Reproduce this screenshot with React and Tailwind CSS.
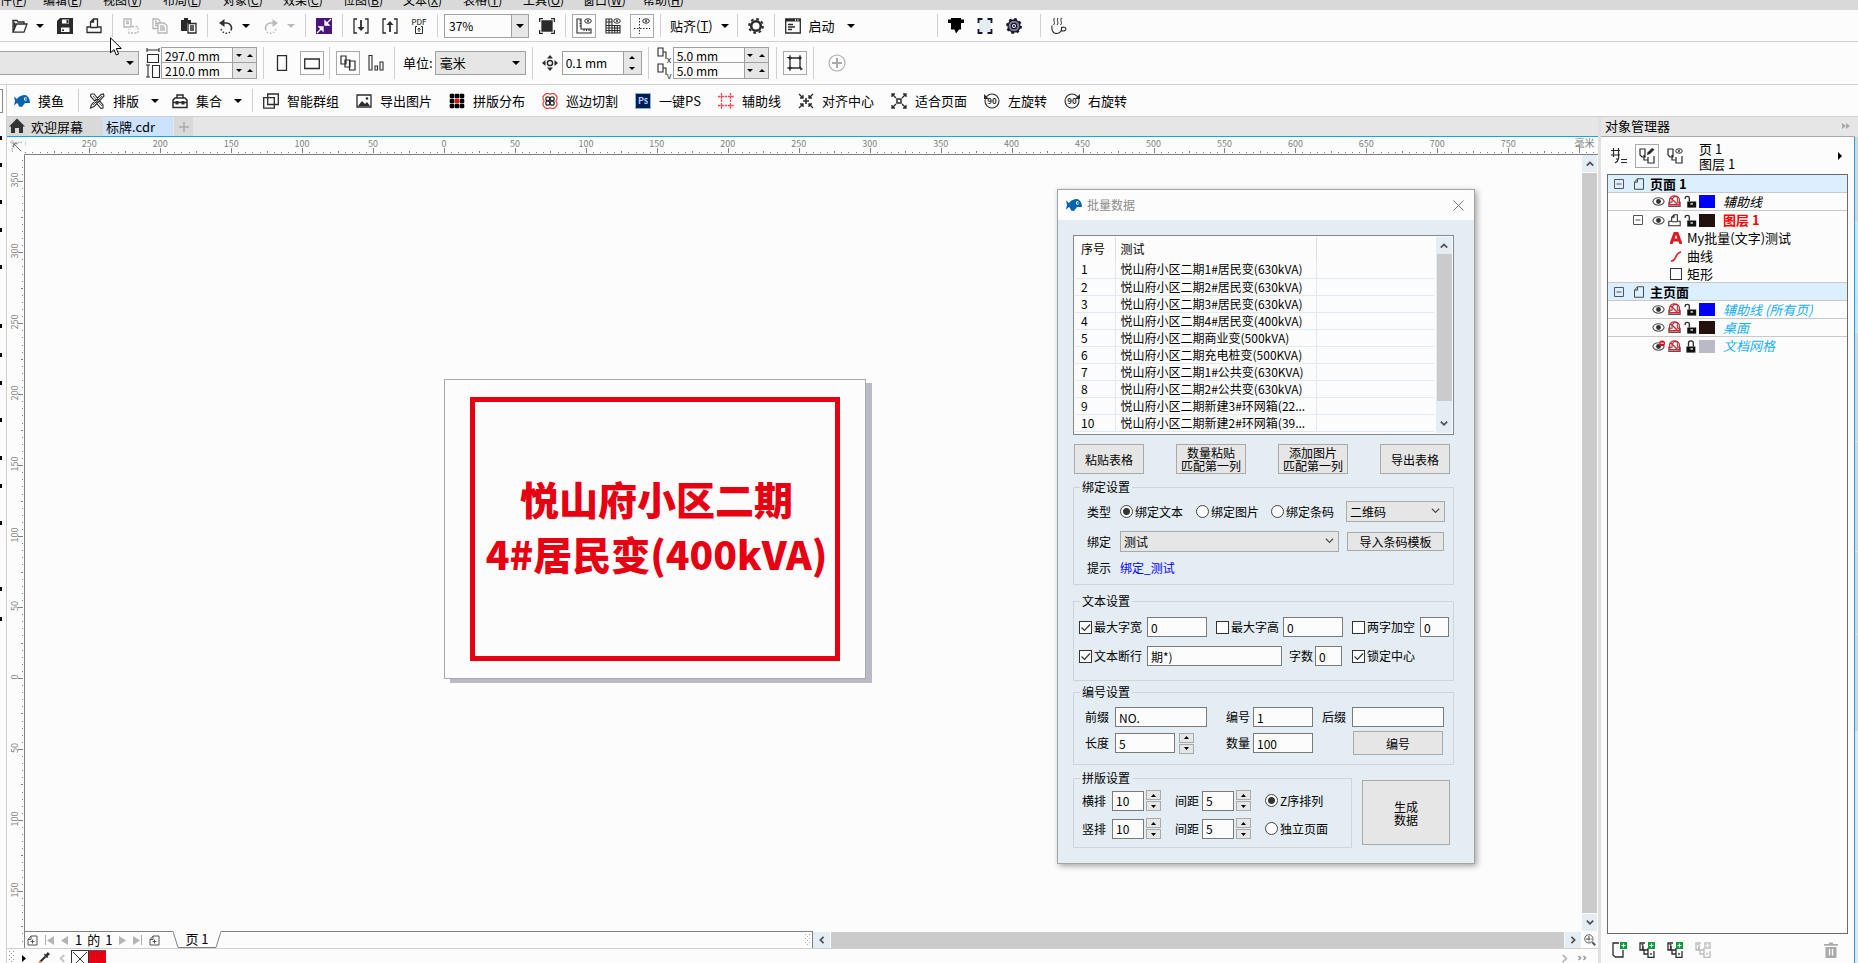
import React from "react";

/* ---------- icons ---------- */

function Svg({ children, size = "size-4", className = "", box = "0 0 16 16" }) {
  return (
    <svg viewBox={box} className={`${size} shrink-0 ${className}`} fill="none" stroke="#2b2b2b" strokeWidth="1.3" aria-hidden="true">
      {children}
    </svg>
  );
}

const FolderIcon = () => (
  <Svg><path d="M1 14V2.500h4l1 1.500h6v2M1 14.200 4.500 6H15l-3 8.200z" /><path d="M1.500 3v9L4 6z" fill="#2b2b2b" stroke="none" /></Svg>
);
const SaveIcon = () => (
  <Svg><path d="M3 0h13v16H0V3z" fill="#2b2b2b" stroke="none" /><path d="M5 1.500h7v4H5zM4 9.500h8.500v4.500H4z" fill="#fcfcfc" stroke="none" /><path d="M9.500 2h2v3h-2zM5 11.500h2v1.500H5z" fill="#2b2b2b" stroke="none" /></Svg>
);
const PrintIcon = ({ className = "", size = "size-4" }) => (
  <Svg className={className} size={size}><path d="M4.500 9V4l3-3h4v8M4.500 9H1v5.500h14V9h-3.500M4.500 9.500h7M7.500 1v3h-3" /></Svg>
);
const CutIcon = () => (
  <Svg><g stroke="#b5b5b5"><path d="M1 1h7v8H1zM3 3.500h3M3 5.500h3" /><path d="M9 8.500h6v6.500H6v-4" strokeDasharray="2 1.500" /></g></Svg>
);
const CopyIcon = () => (
  <Svg><g stroke="#b5b5b5"><path d="M6 10.500H1V1h5l2 2v2M3 3.500h2M3 5.500h3M3 7.500h3" /><path d="M6 5h6l3 2.500V15H6zM8 8h4M8 10h5M8 12h5" /></g></Svg>
);
const PasteIcon = () => (
  <Svg><path d="M0 2h3V0h4v2h3v3H6v8H0z" fill="#2b2b2b" stroke="none" /><path d="M7 5.500h8V15H7zM9 8h4M9 10h4M9 12h4" /></Svg>
);
const UndoIcon = ({ flip = false, color = "#333" }) => (
  <Svg className={flip ? "-scale-x-100" : ""}><path d="M3 5h5.500a5.200 5.200 0 0 1 4.500 7.500" stroke={color} strokeWidth="1.600" /><path d="M12 14a5.500 5.500 0 0 1-9-3.500" stroke={color} strokeWidth="1.500" strokeDasharray="1.500 1.700" /><path d="M6.500 1 1 5l5.500 4z" fill={color} stroke="none" /></Svg>
);
const LaunchIcon = () => (
  <Svg><path d="M0 0h16v16H0z" fill="#4b147a" stroke="none" /><g stroke="#fff"><path d="m15 1-5 5M1 15l5-5" /><path d="M9 3v4h4zM7 13V9H3z" fill="#fff" /></g></Svg>
);
const ImportIcon = ({ up = false }) => (
  <Svg><path d="M4 1H1v14h3M12 1h3v14h-3" /><path d={up ? "M8 14V5" : "M8 2v9"} strokeWidth="1.800" /><path d={up ? "M4.500 7 8 3l3.500 4z" : "M4.500 9 8 13l3.500-4z"} fill="#2b2b2b" stroke="none" /></Svg>
);
const PdfIcon = () => (
  <span className="flex w-4 flex-col items-center justify-center">
    <span className="text-[8px] leading-2">PDF</span>
    <svg viewBox="0 0 8 8" className="size-2" fill="none" stroke="#2b2b2b" aria-hidden="true"><path d="M2 .5H.5v7h7v-7H6M4 6V2M2.500 3.500 4 2l1.500 1.500" /></svg>
  </span>
);
const FullIcon = () => (
  <Svg><path d="M3 3h10v10H3z" fill="#2b2b2b" /><path d="M.6 4V.6H4M12 .6h3.400V4M15.400 12v3.400H12M4 15.400H.6V12" /></Svg>
);
const EyeSmall = () => (
  <g strokeWidth="1"><ellipse cx="12" cy="3" rx="3.300" ry="2.200" /><circle cx="12" cy="3" r="1" fill="#2b2b2b" stroke="none" /></g>
);
const RulerIcon = () => (
  <Svg><path d="M1 1v14h14v-4H5V1zM3.500 3H5M3.500 5.500H5M3.500 8H5M8 11v2M10.500 11v2M13 11v2" strokeWidth="1.100" /><EyeSmall /></Svg>
);
const GridIcon = () => (
  <Svg><path d="M7 1H1v14h14V7M1 4h6M1 7.500h14M1 10h14M1 12.500h14M4 1v14M7 1v14M9.700 7v8M12.300 7v8" strokeWidth="1.100" /><EyeSmall /></Svg>
);
const GuideIcon = () => (
  <Svg><path d="M5.500 0v16M0 10.500h16" strokeWidth="1" strokeDasharray="1.500 1.500" /><EyeSmall /></Svg>
);
const GearIcon = () => (
  <Svg><circle cx="8" cy="8" r="4.800" strokeWidth="2.600" /><circle cx="8" cy="8" r="7" strokeWidth="1.800" strokeDasharray="2.750 2.750" /></Svg>
);
const WindowIcon = () => (
  <Svg><path d="M.7 1h14.600v14H.7z" /><path d="M1 1h14v2.500H1z" fill="#2b2b2b" stroke="none" /><path d="M10 2h1M12.500 2h1" stroke="#fff" /><path d="M3 6.500h5M3 9h7M3 11.500h4" /></Svg>
);
const TagIcon = () => (
  <Svg><path d="M0 1.500h3V0h10v1.500h3V5h-3v6.500h-2L8 15.500 6.500 11.500H3V5H0z" fill="#000" stroke="none" /></Svg>
);
const CornersIcon = () => (
  <Svg><path d="M2 2h12v12H2z" fill="#e4ecf4" stroke="none" /><path d="M1.500 5V1h4M10.500 1h4v4M14.500 11v4h-4M5.500 15h-4v-4" strokeWidth="1.800" stroke="#15152b" /></Svg>
);
const CogDarkIcon = () => (
  <Svg><circle cx="8" cy="8" r="7" stroke="#15152b" strokeWidth="1.800" strokeDasharray="2.750 2.750" /><circle cx="8" cy="8" r="6" fill="#7b7b93" stroke="#15152b" /><circle cx="8" cy="8" r="2.600" fill="#fcfcfc" stroke="#15152b" /><circle cx="8" cy="8" r="1" fill="#15152b" stroke="none" /></Svg>
);
const CupIcon = () => (
  <Svg><path d="M1 7.500c-.5 4 .5 8 4.500 8s5.500-3 5-6.500M10.500 10c1-1.500 4.500-1 4.500 1s-3 2.500-5 1.500" strokeWidth="1.100" /><path d="M3.500 0C1.500 3 5 4 2.500 7M7 0C5 3 8.500 4 6 7M10.500 0C8.500 3 12 4 9.500 7" strokeWidth="1" /></Svg>
);
const FishIcon = () => (
  <Svg box="0 0 16 12" size="h-3 w-4"><path d="M0 1.500 3 4C5 1 8 0 11 0c3 .500 5 4 5 8h-5l-1 1.200L8 12l-3-.5L4 9 3 8 0 10.500 1 6z" fill="#0763b0" stroke="none" /><circle cx="11.500" cy="4" r="1.700" fill="#fff" stroke="none" /><circle cx="11.900" cy="4" r=".9" fill="#0763b0" stroke="none" /></Svg>
);
const ToolsIcon = () => (
  <Svg><path d="M2 1h3l9 11v3l-2 .5L1.500 3zM14.500 1l.5 2L5 13.500 1.500 15l1-3.500L12 1.500z" fill="#fcfcfc" strokeWidth="1.100" /><path d="m4 3 9 10M13 3 4 12" strokeWidth=".8" /></Svg>
);
const BoxIcon = () => (
  <Svg><path d="M5 5V2h6v3M1 7l2-2h10l2 2v7.500H1zM1 9.500h14" strokeWidth="1.500" /><path d="M3.500 8h3v3.500h-3zM9.500 8h3v3.500h-3z" fill="#2b2b2b" stroke="none" /></Svg>
);
const GroupIcon = () => (
  <Svg><path d="M4.700 1h10.600v10.500H4.700zM.7 4.700h10.600v10.500H.7z" /></Svg>
);
const ImageIcon = () => (
  <Svg><path d="M1 2h14v12H1z" /><path d="m2 13 4-5 3 3 2-2 3 4z" fill="#2b2b2b" stroke="none" /><circle cx="11" cy="5.500" r="1.300" fill="#2b2b2b" stroke="none" /></Svg>
);
const DotsIcon = () => (
  <Svg>
    {[3, 8, 13].map((y) => [3, 8, 13].map((x) => (
      <rect key={`${x}-${y}`} x={x - 2.3} y={y - 2.3} width="4.600" height="4.600" rx="1.200" stroke="none" fill={x === 8 && y === 8 ? "#f00" : "#000"} />
    )))}
  </Svg>
);
const CloverIcon = () => (
  <Svg><path d="M8 1.300C10 0 13 .5 14 2.500c1.500 1.500 1 4-.2 5.500 1.200 1.500 1.700 4 .2 5.500-1 2-4 2.500-6 1.200-2 1.300-5 .8-6-1.200C.5 12 1 9.500 2.200 8 1 6.500.5 4 2 2.500 3 .5 6 0 8 1.300z" stroke="#e33" strokeWidth="1.100" /><circle cx="5.800" cy="5.800" r="2" /><circle cx="10.200" cy="5.800" r="2" /><circle cx="5.800" cy="10.200" r="2" /><circle cx="10.200" cy="10.200" r="2" /></Svg>
);
const PsIcon = () => (
  <span className="flex size-4 shrink-0 items-center justify-center border border-[#7fb2e8] bg-[#001b4e] text-[9px] leading-3 font-bold text-[#9fd0ff]">Ps</span>
);
const HashIcon = () => (
  <Svg><path d="M3.500 0v16M12.500 0v16M0 3.500h16M0 12.500h16" stroke="#e8434f" strokeWidth="1.300" strokeDasharray="2.500 .8" /></Svg>
);
const arrowsIn = "M1 1l4 4M5 2v3H2M15 1l-4 4M11 2v3h3M1 15l4-4M2 11h3v3M15 15l-4-4M14 11h-3v3";
const CenterIcon = () => (<Svg><path d={arrowsIn} /><path d="M8 5v6M5 8h6" strokeWidth="1.600" /></Svg>);
const FitIcon = () => (
  <Svg><path d="M1 1l4 4M1 4V1h3M15 1l-4 4M12 1h3v3M1 15l4-4M1 12v3h3M15 15l-4-4M15 12v3h-3" /><path d="M6 6h4v4H6z" strokeWidth="1.500" /></Svg>
);
const RotateIcon = ({ right = false }) => (
  <Svg>
    <circle cx="8" cy="8" r="7" strokeWidth="1.100" />
    <path d={right ? "M16 1v5h-5z" : "M0 1v5h5z"} fill="#2b2b2b" stroke="none" />
    <text x="8" y="11" fontSize="8" fontWeight="700" textAnchor="middle" fill="#2b2b2b" stroke="none">90</text>
  </Svg>
);
const WidthIcon = () => (<Svg><path d="M2 1v4M14 1v4M2 3h12M2.500 7.500h11v8h-11z" strokeWidth="1.100" /></Svg>);
const HeightIcon = () => (<Svg><path d="M1 2h4M1 14h4M3 2v12M7.500 2.500h7v12h-7z" strokeWidth="1.100" /></Svg>);
const PortraitIcon = () => (<Svg><path d="M3.500 .7h9v14.600h-9z" /></Svg>);
const LandscapeIcon = () => (<Svg><path d="M.7 4h14.600v9.500H.7z" /></Svg>);
const PagesIcon = () => (<Svg><path d="M1 1h5v8H1zM5 5h5v7H5zM9.500 6H15v9H9.500z" fill="#fcfcfc" strokeWidth="1.200" /></Svg>);
const BarsIcon = () => (<Svg><path d="M1 .5h3V15H1zM7 11h2.500v4H7zM12 7h3v8h-3z" strokeWidth="1.100" /></Svg>);
const NudgeIcon = () => (
  <Svg><circle cx="8" cy="8" r="2.600" strokeWidth="1.500" /><path d="M8 0 5 3.500h6zM8 16l-3-3.500h6zM0 8l3.500-3v6zM16 8l-3.500-3v6z" fill="#2b2b2b" stroke="none" /></Svg>
);
const DupIcon = ({ axis }) => (
  <Svg><path d="M1 1h5v8H1zM6 5h3v7" strokeWidth="1.100" /><text x="12" y="15.500" fontSize="9" textAnchor="middle" fill="#2b2b2b" stroke="none">{axis}</text></Svg>
);
const BoundsIcon = () => (
  <Svg><path d="M3 3h10v10H3z" /><path d="M2 2h2v2H2zM12 2h2v2h-2zM2 12h2v2H2zM0 2.500h2M3 0v2M13 0v2M0 13h2M3 14v2" fill="#2b2b2b" strokeWidth="1" /><path d="m12.500 10.500 3.500 4-2 .2-.5 1.300z" fill="#2b2b2b" stroke="none" /></Svg>
);
const PlusCircle = () => (
  <Svg size="size-[18px]" box="0 0 18 18"><circle cx="9" cy="9" r="8" stroke="#aaa" strokeWidth="1.100" /><path d="M9 4v10M4 9h10" stroke="#aaa" strokeWidth="2" /></Svg>
);
const HomeIcon = () => (
  <Svg><path d="M8 .5 16 8.500h-2V15h-4v-5H6v5H2V8.500H0z" fill="#333" stroke="none" /></Svg>
);
const OriginIcon = () => (
  <Svg size="size-3"><path d="M0 3h16M3 0v16" strokeDasharray="2 1.500" stroke="#999" /><path d="m5 5 10 10M5 10V5h5" stroke="#666" /></Svg>
);
const DocPlus = () => (
  <Svg size="size-[11px]" box="0 0 11 11"><path d="M1 4.500 4 1h6v9H1zM4 1v3.500H1M5.500 4.500v4M3.500 6.500h4" stroke="#555" strokeWidth="1" /></Svg>
);
const ZoomIcon = () => (
  <Svg size="size-3"><circle cx="6.500" cy="6.500" r="5.500" stroke="#555" /><path d="m11 11 4 4" stroke="#555" strokeWidth="2.500" /><path d="M6.500 3v7M3 6.500h7" stroke="#555" strokeDasharray="2 1" strokeWidth="2" /></Svg>
);
const DropperIcon = () => (
  <Svg size="size-3"><path d="m9 2 5 5-2 1-4-4zM10 4l3-4 3 3-4 3z" fill="#2b2b2b" stroke="none" /><path d="m10 6-7 7" strokeWidth="2.500" /><path d="m3.500 12-2 3" stroke="#e8762c" strokeWidth="2" /></Svg>
);
const EyeIcon = ({ off = false }) => (
  <Svg size="size-[13px]"><path d="M1 8c2-6 12-6 14 0-2 6-12 6-14 0z" stroke="#555" strokeWidth="1.300" /><circle cx="8" cy="8" r="3" fill="#333" stroke="none" />{off && <circle cx="12.500" cy="4" r="3.500" fill="#e60012" stroke="none" />}{off && <path d="M10.500 4h4" stroke="#fff" strokeWidth="1.500" />}</Svg>
);
const NoPrintIcon = () => (
  <Svg size="size-[13px]"><path d="M5 9V5l2.500-3h4v7H15v5H1V9z" stroke="#555" /><path d="M2 12V6c0-3 3-5 6-5s6 2 6 5v6zM3 3l10 10" stroke="#e0202c" strokeWidth="1.600" /></Svg>
);
const LockIcon = ({ closed = false }) => (
  <Svg size="size-[13px]"><path d={closed ? "M3 8h11v7.500H3z" : "M4 8h11v7.500H4z"} fill="#111" stroke="none" /><path d={closed ? "M5.500 8V4a3 3 0 0 1 6 0v4" : "M6.500 8V3.500C6.500 1 1.500 1 1.500 3.500V5"} strokeWidth="1.600" /><path d="M8 11h3" stroke="#fff" strokeWidth="1.600" /></Svg>
);
const PageIcon = () => (
  <Svg size="size-3"><path d="M2 5.500 6 1h8v14H2zM6 1v4.500H2" stroke="#444" /></Svg>
);
const StructIcon = () => (
  <Svg><path d="M2.500 0v9M0 2.500h9M0 7h9M7.500 0v9" strokeWidth="1.200" /><path d="M5 11h3M6 13.500 4 15M10 11.500h6M10 14.500h6M8 9l-2 5" strokeWidth="1.200" /></Svg>
);
const LayersIcon = ({ eye = false }) => (
  <Svg>
    <path d="M1 1h5v8H3L1 7zM5 7v5h4M9 9v6h6V8" strokeWidth="1.200" />
    {eye ? <EyeSmall /> : <path d="m8 7 .5-2.500L13 0l2.500 1.500L11 6z" fill="#2b2b2b" stroke="none" />}
  </Svg>
);
const NewLayerIcon = ({ label, grey = false }) => (
  <Svg>
    <g stroke={grey ? "#bbb" : "#2b2b2b"}>
      {label ? <path d="M6 1H1v7h4v4h4v3.300h6V9M4 4v4M9 6v6M5 8h4M12 11v2" strokeWidth="1.300" /> : <path d="M8 1H2v12l2.500 2H12V8" />}
    </g>
    {label && <text x="3.500" y="7.500" fontSize="7" fontWeight="700" textAnchor="middle" stroke="none" fill={grey ? "#bbb" : "#2b2b2b"}>{label}</text>}
    <path d="M9 0h7v7H9z" fill={grey ? "#ccc" : "#0a9a3c"} stroke="none" />
    <path d="M12.500 1.500v4M10.500 3.500h4" stroke="#fff" strokeWidth="1.200" />
  </Svg>
);
const TrashIcon = () => (
  <Svg><path d="M1 2h5V.5h4V2h5v1.800H1zM2.500 5h11v11h-11z" fill="#aaa" stroke="none" /><path d="M6.500 7v6.500M9.500 7v6.500" stroke="#fcfcfc" /></Svg>
);
const CloseIcon = () => (
  <Svg size="size-[11px]" box="0 0 11 11"><path d="m.5.5 10 10m0-10-10 10" stroke="#777788" strokeWidth="1" /></Svg>
);

const Tri = ({ dir = "down", size = "h-1 w-2", color = "#000" }) => {
  const d = { down: "M0 0h8L4 8z", up: "M0 8h8L4 0z", right: "M0 0v8l8-4z", left: "M8 0v8L0 4z" }[dir];
  return (
    <svg viewBox="0 0 8 8" preserveAspectRatio="none" className={`${size} shrink-0`} fill={color} aria-hidden="true"><path d={d} /></svg>
  );
};
const Chevron = ({ dir, color = "#505050", w = 2.2, size = "size-2" }) => {
  const d = { down: "m1 2 4 4 4-4", up: "m1 7 4-4 4 4", left: "M7 1 3 5l4 4", right: "m3 1 4 4-4 4" }[dir];
  return (
    <svg viewBox="0 0 10 10" className={`${size} shrink-0`} fill="none" stroke={color} strokeWidth={w} aria-hidden="true"><path d={d} /></svg>
  );
};

/* ---------- toolbar parts ---------- */

const IconButton = ({ label, children, boxed = false }) => (
  <button type="button" aria-label={label} className={boxed ? "flex size-6 shrink-0 items-center justify-center border border-[#a9a9a9]" : "flex shrink-0 items-center justify-center"}>
    {children}
  </button>
);

const Group = ({ children, className = "gap-[13px] px-[10px]" }) => (
  <div className={`flex h-full shrink-0 items-center border-l border-[#d0d0d0] first:border-l-0 ${className}`}>{children}</div>
);

const WithCaret = ({ label, children, grey = false, gap = "gap-2" }) => (
  <button type="button" aria-label={label} className={`flex items-center ${gap}`}>
    {children}
    <Tri color={grey ? "#bbb" : "#000"} />
  </button>
);

const Combo = ({ label, value, width, bg = "bg-[#e6e6e6]", split = false }) => (
  <div className={`flex h-6 shrink-0 items-stretch border border-[#a0a0a0] ${bg} ${width}`}>
    <select aria-label={label} defaultValue={value} className="min-w-0 flex-1 appearance-none bg-transparent px-1 outline-none">
      <option value={value}>{value}</option>
    </select>
    <span className={`flex w-[17px] items-center justify-center ${split ? "border-l border-[#a0a0a0] bg-[#e6e6e6]" : ""}`}><Tri /></span>
  </div>
);

const PairField = ({ labels, values }) => (
  <div className="flex w-24 shrink-0 flex-col divide-y divide-[#a0a0a0] border border-[#a0a0a0]">
    {values.map((v, i) => (
      <div key={labels[i]} className="flex h-[15px]">
        <input aria-label={labels[i]} defaultValue={v} className="min-w-0 flex-1 bg-transparent px-[3px] leading-[15px] outline-none" />
        <span className="flex w-6 items-center justify-around border-l border-[#a0a0a0] bg-[#e6e6e6]">
          <Tri size="h-[3px] w-[6px]" /><Tri dir="up" size="h-[3px] w-[6px]" />
        </span>
      </div>
    ))}
  </div>
);

const menus = [["件", "F"], ["编辑", "E"], ["视图", "V"], ["布局", "L"], ["对象", "C"], ["效果", "C"], ["位图", "B"], ["文本", "X"], ["表格", "T"], ["工具", "O"], ["窗口", "W"], ["帮助", "H"]];

function MenuBar() {
  return (
    <nav className="flex h-[10px] shrink-0 items-end overflow-hidden bg-[#d9d9d9] pb-[2px] text-[12px] leading-4">
      {menus.map(([t, k], i) => (
        <button key={t} type="button" className={i === 0 ? "w-[43px] shrink-0 text-left" : "w-[60px] shrink-0 text-left"}>{t}(<u>{k}</u>)</button>
      ))}
    </nav>
  );
}

function StandardBar() {
  return (
    <div className="flex h-8 shrink-0 items-center border-b border-[#d0d0d0] py-1 pl-[2px]">
      <Group>
        <WithCaret label="打开"><FolderIcon /></WithCaret>
        <IconButton label="保存"><SaveIcon /></IconButton>
        <IconButton label="打印"><PrintIcon /></IconButton>
      </Group>
      <Group>
        <IconButton label="剪切"><CutIcon /></IconButton>
        <IconButton label="复制"><CopyIcon /></IconButton>
        <IconButton label="粘贴"><PasteIcon /></IconButton>
      </Group>
      <Group>
        <WithCaret label="撤消"><UndoIcon /></WithCaret>
        <WithCaret label="重做" grey><UndoIcon flip color="#bbb" /></WithCaret>
      </Group>
      <Group><IconButton label="搜索内容"><LaunchIcon /></IconButton></Group>
      <Group>
        <IconButton label="导入"><ImportIcon /></IconButton>
        <IconButton label="导出"><ImportIcon up /></IconButton>
        <IconButton label="发布为"><PdfIcon /></IconButton>
      </Group>
      <Group className="gap-[10px] pr-[10px] pl-[6px]">
        <Combo label="缩放级别" value="37%" width="w-[85px]" bg="bg-[#fcfcfc]" split />
        <IconButton label="全屏预览"><FullIcon /></IconButton>
      </Group>
      <Group className="gap-[9px] px-[6px]">
        <IconButton label="显示标尺" boxed><RulerIcon /></IconButton>
        <IconButton label="显示网格"><GridIcon /></IconButton>
        <IconButton label="显示辅助线" boxed><GuideIcon /></IconButton>
      </Group>
      <Group className="pr-2 pl-[9px]"><WithCaret label="贴齐"><span className="text-[13px]">贴齐(<u>T</u>)</span></WithCaret></Group>
      <Group><IconButton label="选项"><GearIcon /></IconButton></Group>
      <Group className="w-[163px] pl-[10px]">
        <WithCaret label="启动" gap="gap-3"><span className="flex items-center gap-2 text-[13px]"><WindowIcon />启动</span></WithCaret>
      </Group>
      <Group className="w-[103px] gap-[13px] pl-[10px]">
        <IconButton label="标签"><TagIcon /></IconButton>
        <IconButton label="选框"><CornersIcon /></IconButton>
        <IconButton label="设置"><CogDarkIcon /></IconButton>
      </Group>
      <Group><IconButton label="休息"><CupIcon /></IconButton></Group>
    </div>
  );
}

function PropertyBar() {
  return (
    <div className="flex h-[43px] shrink-0 items-center border-b border-[#d0d0d0] py-[5px]">
      <Group className="pr-[6px]">
        <div className="flex h-6 w-[139px] items-stretch border border-l-0 border-[#a0a0a0] bg-[#e6e6e6]">
          <select aria-label="页面大小" className="min-w-0 flex-1 appearance-none bg-transparent outline-none" />
          <span className="flex w-4 items-center justify-center"><Tri /></span>
        </div>
        <span className="ml-[6px] flex flex-col"><WidthIcon /><HeightIcon /></span>
        <PairField labels={["页面宽度", "页面高度"]} values={["297.0 mm", "210.0 mm"]} />
      </Group>
      <Group className="gap-[10px] pr-[5px] pl-[10px]">
        <IconButton label="纵向"><PortraitIcon /></IconButton>
        <IconButton label="横向" boxed><LandscapeIcon /></IconButton>
      </Group>
      <Group className="gap-2 pr-[10px] pl-[6px]">
        <IconButton label="所有页面" boxed><PagesIcon /></IconButton>
        <IconButton label="当前页"><BarsIcon /></IconButton>
      </Group>
      <Group className="gap-[2px] pr-[6px] pl-2">
        <span className="text-[13px]">单位:</span>
        <div className="text-[13px]"><Combo label="单位" value="毫米" width="w-[91px]" /></div>
      </Group>
      <Group className="gap-1 pr-[6px] pl-[9px]">
        <NudgeIcon />
        <div className="flex h-6 w-20 border border-[#a0a0a0]">
          <input aria-label="微调距离" defaultValue="0.1 mm" className="min-w-0 flex-1 bg-transparent px-[3px] outline-none" />
          <span className="flex w-[18px] flex-col items-center justify-around border-l border-[#a0a0a0] bg-[#e6e6e6]">
            <Tri dir="up" size="h-[3px] w-[6px]" /><Tri size="h-[3px] w-[6px]" />
          </span>
        </div>
      </Group>
      <Group className="pr-[7px] pl-2">
        <span className="flex flex-col"><DupIcon axis="x" /><DupIcon axis="y" /></span>
        <PairField labels={["再制距离 X", "再制距离 Y"]} values={["5.0 mm", "5.0 mm"]} />
      </Group>
      <Group className="px-[6px]"><IconButton label="视为已填充" boxed><BoundsIcon /></IconButton></Group>
      <Group className="pl-[14px]"><IconButton label="添加"><PlusCircle /></IconButton></Group>
    </div>
  );
}

const plugins = [
  ["智能群组", GroupIcon], ["导出图片", ImageIcon], ["拼版分布", DotsIcon], ["巡边切割", CloverIcon], ["一键PS", PsIcon],
  ["辅助线", HashIcon], ["对齐中心", CenterIcon], ["适合页面", FitIcon], ["左旋转", RotateIcon],
];

function PluginBar() {
  return (
    <div className="flex h-8 shrink-0 items-center border-b border-[#d0d0d0] py-1 pl-[7px] text-[13px]">
      <Group className="pr-[14px]"><button type="button" className="flex items-center gap-2"><FishIcon />摸鱼</button></Group>
      <Group>
        <WithCaret label="排版" gap="gap-3"><span className="flex items-center gap-2"><ToolsIcon />排版</span></WithCaret>
        <WithCaret label="集合" gap="gap-3"><span className="flex items-center gap-2"><BoxIcon />集合</span></WithCaret>
      </Group>
      <Group className="gap-[17px] pl-[10px]">
        {plugins.map(([t, Icon]) => (
          <button key={t} type="button" className="flex items-center gap-2"><Icon />{t}</button>
        ))}
        <button type="button" className="flex items-center gap-2"><RotateIcon right />右旋转</button>
      </Group>
    </div>
  );
}

/* ---------- rulers ---------- */

const SCALE = 1.419;
const range = (a, b, s) => Array.from({ length: Math.floor((b - a) / s) + 1 }, (_, i) => a + i * s);

function TopRuler() {
  return (
    <div className="flex h-[18px] shrink-0">
      <span className="flex w-[17px] shrink-0 items-center justify-center"><OriginIcon /></span>
      <div className="min-w-0 flex-1 border-b border-l border-b-[#808080] border-l-transparent">
        <svg className="block h-[17px] w-full" aria-hidden="true">
          {range(-295, 810, 5).map((m) => {
            const x = Math.round(419 + m * SCALE);
            const len = m % 50 === 0 ? 5 : m % 25 === 0 ? 2 : 1;
            return <rect key={m} x={x} y={16 - len} width="1" height={len} fill="#808080" />;
          })}
          {range(-300, 750, 50).map((m) => (
            <text key={m} x={419 + m * SCALE} y="10" fontSize="9" textAnchor="middle" fill="#808080">{Math.abs(m)}</text>
          ))}
          <text x="99.900%" y="10" dx="-2" fontSize="10" textAnchor="end" fill="#808080">毫米</text>
        </svg>
      </div>
    </div>
  );
}

function SideRuler() {
  return (
    <div className="w-[17px] shrink-0 overflow-hidden">
      <svg className="block h-full w-full" aria-hidden="true">
        {range(-190, 365, 5).map((m) => {
          const y = Math.round(523 - m * SCALE);
          const len = m % 50 === 0 ? 5 : m % 25 === 0 ? 2 : 1;
          return <rect key={m} x={16 - len} y={y} width={len} height="1" fill="#808080" />;
        })}
        {range(-150, 350, 50).map((m) => {
          const y = Math.round(522 - m * SCALE);
          return <text key={m} x="11" y={y} fontSize="9" textAnchor="middle" fill="#808080" transform={`rotate(-90 11 ${y})`}>{Math.abs(m)}</text>;
        })}
      </svg>
    </div>
  );
}

/* ---------- dialog ---------- */

const rows = [
  "悦山府小区二期1#居民变(630kVA)", "悦山府小区二期2#居民变(630kVA)", "悦山府小区二期3#居民变(630kVA)", "悦山府小区二期4#居民变(400kVA)",
  "悦山府小区二期商业变(500kVA)", "悦山府小区二期充电桩变(500KVA)", "悦山府小区二期1#公共变(630KVA)", "悦山府小区二期2#公共变(630kVA)",
  "悦山府小区二期新建3#环网箱(22...", "悦山府小区二期新建2#环网箱(39...",
];

const Button = ({ children, className }) => (
  <button type="button" className={`flex shrink-0 items-center justify-center border border-[#a9a9a9] bg-[#e6e6e6] text-center leading-[13px] ${className}`}>{children}</button>
);
const Field = ({ id, value = "", width, label }) => (
  <input id={id} aria-label={label} defaultValue={value} className={`h-5 shrink-0 border border-[#7a7a7a] bg-[#fcfcfc] px-[3px] outline-none ${width}`} />
);
const Radio = ({ name, label, checked = false, width = "" }) => (
  <label className={`flex shrink-0 items-center gap-[2px] ${width}`}>
    <input type="radio" name={name} defaultChecked={checked} className="size-[13px] shrink-0 appearance-none rounded-full border border-[#444] bg-[#fcfcfc] checked:bg-[radial-gradient(circle,#333_3px,#fcfcfc_4px)]" />
    {label}
  </label>
);
const Check = ({ label, checked = false, width = "" }) => (
  <label className={`flex shrink-0 items-center gap-[2px] ${width}`}>
    <span className="grid size-[13px] shrink-0">
      <input type="checkbox" defaultChecked={checked} className="peer size-[13px] appearance-none border border-[#333] bg-[#fcfcfc] [grid-area:1/1]" />
      <svg viewBox="0 0 13 13" className="pointer-events-none hidden size-[13px] [grid-area:1/1] peer-checked:block" fill="none" stroke="#333" strokeWidth="1.200" aria-hidden="true"><path d="m2.500 6.500 3 3 5.500-6" /></svg>
    </span>
    {label}
  </label>
);
const DSelect = ({ id, label, value, width }) => (
  <span className={`flex h-[21px] shrink-0 items-center border border-[#a9a9a9] bg-[#e6e6e6] pr-[4px] ${width}`}>
    <select id={id} aria-label={label} defaultValue={value} className="min-w-0 flex-1 appearance-none bg-transparent px-[3px] outline-none"><option value={value}>{value}</option></select>
    <Chevron dir="down" w={1.4} size="size-[9px]" />
  </span>
);
const Spin = ({ label }) => (
  <span className="flex w-[15px] shrink-0 flex-col gap-px">
    <button type="button" aria-label={`${label}增加`} className="flex h-[10px] items-center justify-center border border-[#a9a9a9] bg-[#e6e6e6]"><Tri dir="up" size="h-[3px] w-[5px]" /></button>
    <button type="button" aria-label={`${label}减少`} className="flex h-[10px] items-center justify-center border border-[#a9a9a9] bg-[#e6e6e6]"><Tri size="h-[3px] w-[5px]" /></button>
  </span>
);
const Section = ({ title, className, pad, children }) => (
  <fieldset className={`border border-[#d2d5d8] ${className}`}>
    <legend className="ml-[6px] px-[2px] leading-4">{title}</legend>
    <div className={pad}>{children}</div>
  </fieldset>
);

function BatchDialog() {
  return (
    <section role="dialog" aria-label="批量数据" className="absolute top-[34px] left-[1032px] flex w-[418px] flex-col border border-[#a3a3a3] bg-[#e4ecf4] text-[12px] leading-4 shadow-[2px_2px_6px_rgba(0,0,0,0.35)]">
      <header className="flex h-[30px] items-center bg-[#fcfcfc] pr-[10px] pl-2 text-[#8c8c8c]">
        <FishIcon />
        <h2 className="ml-[5px] flex-1">批量数据</h2>
        <button type="button" aria-label="关闭"><CloseIcon /></button>
      </header>
      <div className="flex flex-col pt-[15px] pr-5 pb-[15px] pl-[15px]">
        <div className="flex h-[200px] w-[381px] border border-[#828790] bg-[#fcfcfc] p-px">
          <div className="min-w-0 flex-1 overflow-hidden">
            <table className="w-full table-fixed border-collapse text-left">
              <thead>
                <tr className="h-6">
                  <th className="w-[40px] border-r border-[#dcdfe3] pl-[6px] font-normal">序号</th>
                  <th className="w-[201px] border-r border-[#dcdfe3] pl-[5px] font-normal">测试</th>
                  <th aria-label="空列" />
                </tr>
              </thead>
              <tbody>
                {rows.map((r, i) => (
                  <tr key={r} className="h-[17px] border-b border-[#e1e9f1]">
                    <td className="border-r border-[#e1e9f1] py-0 pl-[6px] leading-4">{i + 1}</td>
                    <td className="overflow-hidden border-r border-[#e1e9f1] py-0 pl-[5px] leading-4 whitespace-nowrap">{r}</td>
                    <td />
                  </tr>
                ))}
              </tbody>
            </table>
          </div>
          <div className="ml-px flex w-4 shrink-0 flex-col items-center bg-[#e4ecf4]">
            <span className="flex h-[17px] items-center"><Chevron dir="up" /></span>
            <span className="h-[147px] w-[15px] bg-[#cbcbcb]" />
            <span className="flex flex-1 items-end pb-[5px]"><Chevron dir="down" /></span>
          </div>
        </div>
        <div className="mt-[9px] flex gap-8 pl-px">
          <Button className="h-[30px] w-[70px]">粘贴表格</Button>
          <Button className="h-[30px] w-[70px]">数量粘贴<br />匹配第一列</Button>
          <Button className="h-[30px] w-[70px]">添加图片<br />匹配第一列</Button>
          <Button className="h-[30px] w-[70px]">导出表格</Button>
        </div>

        <Section title="绑定设置" className="mt-[5px] h-[106px] w-[381px]" pad="pl-[13px]">
          <div className="mt-[6px] flex items-center">
            <span className="w-[33px]">类型</span>
            <Radio name="kind" label="绑定文本" checked width="w-[76px]" />
            <Radio name="kind" label="绑定图片" width="w-[75px]" />
            <Radio name="kind" label="绑定条码" width="w-[75px]" />
            <DSelect label="条码类型" value="二维码" width="w-[99px]" />
          </div>
          <div className="mt-[9px] flex items-center">
            <label htmlFor="bind" className="w-[33px]">绑定</label>
            <DSelect id="bind" value="测试" width="w-[219px] mr-2" />
            <Button className="h-[19px] w-[97px]">导入条码模板</Button>
          </div>
          <div className="mt-2 flex items-center">
            <span className="w-[33px]">提示</span>
            <span className="text-[#0000ff]">绑定_测试</span>
          </div>
        </Section>

        <Section title="文本设置" className="mt-2 h-[88px] w-[381px]" pad="pl-[5px]">
          <div className="mt-2 flex items-center">
            <Check label="最大字宽" checked width="w-[68px]" />
            <Field label="最大字宽值" value="0" width="w-[60px] mr-[9px]" />
            <Check label="最大字高" width="w-[67px]" />
            <Field label="最大字高值" value="0" width="w-[60px] mr-[9px]" />
            <Check label="两字加空" width="w-[68px]" />
            <Field label="两字加空值" value="0" width="w-[29px]" />
          </div>
          <div className="mt-[9px] flex items-center">
            <Check label="文本断行" checked width="w-[68px]" />
            <Field label="断行规则" value="期*)" width="w-[135px] mr-[7px]" />
            <label htmlFor="chars" className="w-[26px]">字数</label>
            <Field id="chars" value="0" width="w-[27px] mr-[10px]" />
            <Check label="锁定中心" checked />
          </div>
        </Section>

        <Section title="编号设置" className="mt-[3px] h-[81px] w-[381px]" pad="pl-[11px]">
          <div className="mt-[7px] flex items-center">
            <label htmlFor="prefix" className="w-[30px]">前缀</label>
            <Field id="prefix" value="NO." width="w-[92px] mr-[19px]" />
            <label htmlFor="no" className="w-[27px]">编号</label>
            <Field id="no" value="1" width="w-[60px] mr-[9px]" />
            <label htmlFor="suffix" className="w-[30px]">后缀</label>
            <Field id="suffix" width="w-[92px]" />
          </div>
          <div className="mt-1 flex items-center">
            <label htmlFor="len" className="w-[30px]">长度</label>
            <Field id="len" value="5" width="w-[60px] mr-1" />
            <Spin label="长度" />
            <label htmlFor="count" className="ml-8 w-[27px]">数量</label>
            <Field id="count" value="100" width="w-[60px] mr-10" />
            <Button className="h-6 w-[90px]">编号</Button>
          </div>
        </Section>

        <div className="mt-[5px] flex items-end gap-[10px]">
          <Section title="拼版设置" className="h-[78px] w-[279px]" pad="pl-2">
            {[["横排", "10", "Z序排列", true], ["竖排", "10", "独立页面", false]].map(([t, v, r, c], i) => (
              <div key={t} className={i === 0 ? "mt-1 flex items-center" : "mt-[7px] flex items-center"}>
                <label htmlFor={`n${i}`} className="w-[30px]">{t}</label>
                <Field id={`n${i}`} value={v} width="w-8 mr-[2px]" />
                <Spin label={t} />
                <label htmlFor={`g${i}`} className="ml-[14px] w-[27px]">间距</label>
                <Field id={`g${i}`} value="5" width="w-8 mr-[2px]" />
                <Spin label="间距" />
                <span className="ml-[14px]"><Radio name="order" label={r} checked={c} /></span>
              </div>
            ))}
          </Section>
          <Button className="mb-[3px] h-[65px] w-[88px]">生成<br />数据</Button>
        </div>
      </div>
    </section>
  );
}

/* ---------- workspace ---------- */

function Workspace() {
  return (
    <div className="flex min-w-0 flex-1 flex-col">
      <div className="flex h-[20px] shrink-0 items-stretch border-b border-[#0ea5f5] bg-[#e6e6e6] text-[13px] leading-[17px]">
        <button type="button" className="flex w-24 items-center gap-[6px] bg-[#d9d9d9] pb-px pl-[2px]"><HomeIcon />欢迎屏幕</button>
        <button type="button" className="flex w-[70px] items-center bg-[#cce2ff] pb-px pl-[3px]">标牌.cdr</button>
        <button type="button" aria-label="新建文档" className="ml-px flex w-[19px] items-center justify-center bg-[#d9d9d9]">
          <svg viewBox="0 0 10 10" className="size-[10px]" stroke="#aaa" strokeWidth="1.500" aria-hidden="true"><path d="M5 0v10M0 5h10" /></svg>
        </button>
      </div>
      <TopRuler />
      <div className="flex min-h-0 flex-1">
        <SideRuler />
        <div className="flex min-w-0 flex-1 flex-col">
          <div className="flex min-h-0 flex-1">
            <main className="relative min-w-0 flex-1 border-l border-[#808080]">
              <div className="absolute top-[224px] left-[419px] flex h-[300px] w-[422px] items-center justify-center border border-[#a9a9a9] bg-[#fcfcfc] shadow-[6px_4px_0_#b9bac6]">
                <div className="flex h-[264px] w-[370px] items-center justify-center border-5 border-[#e60012] pb-[7px] pl-[3px] text-center text-[39px] leading-[55px] font-black whitespace-nowrap text-[#e60012]">
                  <p>悦山府小区二期<br />4#居民变(400kVA)</p>
                </div>
              </div>
              <BatchDialog />
            </main>
            <div className="flex w-4 shrink-0 flex-col bg-[#fcfcfc] pr-px">
              <span className="mb-px flex h-[17px] items-center justify-center bg-[#e4ecf4]"><Chevron dir="up" /></span>
              <span className="flex-1 bg-[#cbcbcb]" />
              <span className="mt-px flex h-[17px] items-center justify-center bg-[#e4ecf4]"><Chevron dir="down" /></span>
            </div>
          </div>
          <div className="flex h-[17px] shrink-0">
            <div className="flex w-[789px] shrink-0 border-r border-l border-[#808080]">
              <div className="flex w-[148px] shrink-0 items-center gap-[7px] border-t border-[#808080] pl-[2px] whitespace-nowrap">
                <button type="button" aria-label="添加页"><DocPlus /></button>
                <button type="button" aria-label="首页" className="flex items-center"><span className="mr-px h-[10px] w-px bg-[#aaa]" /><Tri dir="left" size="h-[9px] w-[7px]" color="#b5b5b5" /></button>
                <button type="button" aria-label="上一页"><Tri dir="left" size="h-[9px] w-[7px]" color="#b5b5b5" /></button>
                <span className="flex gap-[5px] text-[13px] leading-4"><span>1</span><span>的</span><span>1</span></span>
                <button type="button" aria-label="下一页"><Tri dir="right" size="h-[9px] w-[7px]" color="#b5b5b5" /></button>
                <button type="button" aria-label="末页" className="flex items-center"><Tri dir="right" size="h-[9px] w-[7px]" color="#b5b5b5" /><span className="ml-px h-[10px] w-px bg-[#aaa]" /></button>
                <button type="button" aria-label="末尾添加页"><DocPlus /></button>
              </div>
              <button type="button" className="grid w-12 shrink-0 place-items-center text-[13px] leading-[14px]">
                <svg viewBox="0 0 48 17" className="h-[17px] w-12 [grid-area:1/1]" fill="none" stroke="#808080" aria-hidden="true"><path d="M0 .5 5 16.500h38L48 .5" /></svg>
                <span className="pb-px [grid-area:1/1]">页 1</span>
              </button>
              <div className="flex flex-1 items-center justify-end border-t border-[#808080] pr-px">
                <svg viewBox="0 0 6 12" className="h-3 w-[6px]" fill="#aaa" aria-hidden="true"><path d="M0 0h1v1H0zM4 0h1v1H4zM2 2h1v1H2zM0 4h1v1H0zM4 4h1v1H4zM2 6h1v1H2zM0 8h1v1H0zM4 8h1v1H4zM2 10h1v1H2z" /></svg>
              </div>
            </div>
            <span className="mt-px mr-px flex w-[17px] shrink-0 items-center justify-center bg-[#e4ecf4]"><Chevron dir="left" /></span>
            <span className="mt-px flex-1 bg-[#cbcbcb]" />
            <span className="mt-px ml-px flex w-4 shrink-0 items-center justify-center bg-[#e4ecf4]"><Chevron dir="right" /></span>
            <button type="button" aria-label="导航器" className="flex w-[17px] shrink-0 items-center justify-center"><ZoomIcon /></button>
          </div>
        </div>
      </div>
      <div className="flex h-[15px] shrink-0 items-start overflow-hidden border-t border-[#d0d0d0] pt-px pr-[11px]">
        <svg viewBox="0 0 6 12" className="mt-px ml-[2px] h-3 w-[6px] shrink-0" fill="#999" aria-hidden="true"><path d="M0 0h1v1H0zM4 0h1v1H4zM2 2h1v1H2zM0 4h1v1H0zM4 4h1v1H4zM2 6h1v1H2zM0 8h1v1H0zM4 8h1v1H4zM2 10h1v1H2z" /></svg>
        <span className="mt-[5px] ml-[7px]"><Tri dir="right" size="h-[7px] w-1" /></span>
        <span className="mt-[2px] ml-3"><DropperIcon /></span>
        <span className="mt-1 ml-2"><Chevron dir="left" color="#c5c5c5" size="size-[9px]" /></span>
        <button type="button" aria-label="无填充" className="ml-1 size-[18px] shrink-0 border border-[#333]">
          <svg viewBox="0 0 16 16" className="size-4" stroke="#333" aria-hidden="true"><path d="m1 1 14 14M15 1 1 15" /></svg>
        </button>
        <button type="button" aria-label="红" className="size-[17px] shrink-0 border-t border-[#555] bg-[#e60012]" />
        <span className="flex-1" />
        <span className="mt-1 mr-2"><Chevron dir="right" color="#bbb" size="size-[9px]" /></span>
        <span className="mt-1 flex"><Chevron dir="right" color="#999" size="h-2 w-[5px]" w={3} /><Chevron dir="right" color="#999" size="h-2 w-[5px]" w={3} /></span>
      </div>
    </div>
  );
}

/* ---------- object manager ---------- */

const Minus = () => (
  <svg viewBox="0 0 10 10" className="size-[10px] shrink-0" fill="none" stroke="#555" aria-hidden="true"><path d="M.5.5h9v9h-9zM2.500 5h5" /></svg>
);

const PageRow = ({ text }) => (
  <li className="flex h-[18px] items-center border-b border-[#c9c9c9] bg-[#dcefff] pl-[6px] font-bold">
    <Minus /><span className="mr-[5px] ml-[9px] flex"><PageIcon /></span>{text}
  </li>
);

const LayerRow = ({ text, swatch, tone = "text-black italic", line = true, open = false, print = false, off = false, closed = false }) => (
  <li className={`flex h-[18px] items-center pl-[25px] ${line ? "border-b border-[#c9c9c9]" : ""}`}>
    <span className="flex w-[19px]">{open && <Minus />}</span>
    <span className="flex gap-[3px]">
      <EyeIcon off={off} />
      {print ? <PrintIcon size="size-[13px]" /> : <NoPrintIcon />}
      <LockIcon closed={closed} />
    </span>
    <span className={`mr-2 ml-[2px] h-[13px] w-4 ${swatch}`} />
    <span className={tone}>{text}</span>
  </li>
);

function ObjectManager() {
  return (
    <aside className="flex w-[257px] shrink-0 flex-col border-l-[3px] border-[#e0e0e0] text-[13px] leading-4">
      <header className="flex h-[20px] shrink-0 items-center border-b border-[#a9a9a9] bg-[#e6e6e6] pr-[5px] pb-px pl-1">
        <h2 className="flex-1">对象管理器</h2>
        <Tri dir="right" size="h-[6px] w-1" color="#aaa" /><Tri dir="right" size="h-[6px] w-1" color="#aaa" />
      </header>
      <div className="flex min-h-0 flex-1 flex-col border-r border-[#0ea5f5] pr-[6px] pl-[6px]">
        <div className="flex h-[37px] shrink-0 items-center gap-2 pr-[6px] pl-1">
          <IconButton label="显示对象属性"><StructIcon /></IconButton>
          <IconButton label="跨图层编辑" boxed><LayersIcon /></IconButton>
          <IconButton label="图层管理器视图"><LayersIcon eye /></IconButton>
          <p className="ml-2 flex-1 leading-[15px]">页 1<br />图层 1</p>
          <Tri dir="right" size="h-2 w-1" />
        </div>
        <ul className="min-h-0 flex-1 border border-[#6a6a6a]">
          <PageRow text="页面 1" />
          <LayerRow text="辅助线" swatch="bg-[#0000ff]" />
          <LayerRow text="图层 1" swatch="bg-[#231110]" tone="font-bold text-[#ff0000]" line={false} open print />
          <li className="flex h-[18px] items-center pl-[60px]"><span className="flex w-[19px] pl-[2px]"><svg viewBox="0 0 12 12" className="size-3" fill="none" stroke="#e01822" strokeWidth="3" aria-hidden="true"><path d="M1 12 5 1h2l4 11M3 8h6" /></svg></span>My批量(文字)测试</li>
          <li className="flex h-[18px] items-center pl-[60px]"><span className="flex w-[19px] pl-[2px]"><svg viewBox="0 0 12 12" className="size-3" fill="none" stroke="#e01822" strokeWidth="1.600" aria-hidden="true"><path d="M1 11c6 1 3-8 10-9" /></svg></span>曲线</li>
          <li className="flex h-[18px] items-center border-b border-[#c9c9c9] pl-[60px]"><span className="flex w-[19px] pl-[2px]"><span className="size-3 border border-[#333]" /></span>矩形</li>
          <PageRow text="主页面" />
          <LayerRow text="辅助线 (所有页)" swatch="bg-[#0000ff]" tone="italic text-[#18aef8]" />
          <LayerRow text="桌面" swatch="bg-[#231110]" tone="italic text-[#18aef8]" />
          <LayerRow text="文档网格" swatch="bg-[#b9bac6]" tone="italic text-[#18aef8]" line={false} off closed />
        </ul>
        <div className="flex h-[29px] shrink-0 items-center gap-3 pt-[6px] pr-[9px] pb-[3px] pl-1">
          <IconButton label="新建图层"><NewLayerIcon /></IconButton>
          <IconButton label="新建主图层(所有页)"><NewLayerIcon label="1" /></IconButton>
          <IconButton label="新建主图层(奇数页)"><NewLayerIcon label="1" /></IconButton>
          <IconButton label="新建主图层(偶数页)"><NewLayerIcon label="2" grey /></IconButton>
          <span className="flex-1" />
          <IconButton label="删除"><TrashIcon /></IconButton>
        </div>
      </div>
    </aside>
  );
}

/* Edge strips where neighbouring docked bars show a sliver of their content */
const toolGaps = ["h-[64px]", "h-[27px]", "h-[37px]", "h-[28px]", "h-[37px]", "h-[59px]", "h-[29px]", "h-[28px]", "h-[37px]", "h-[38px]", "h-[28px]", "h-[37px]", "h-[66px]", "h-[30px]"];
const dockTabs = ["h-[85px] bg-[#d6d6d6]", "h-[109px] bg-[#cce2ff]", "h-[108px] bg-[#d6d6d6]", "h-[109px] bg-[#d6d6d6]", "h-[82px] bg-[#d6d6d6]", "h-[96px] bg-[#d6d6d6]"];

export default function App() {
  return (
    <div className="relative flex h-screen flex-col overflow-hidden bg-[#fcfcfc] font-['Noto_Sans_CJK_SC',sans-serif] text-[12px] leading-4 text-black">
      <MenuBar />
      <StandardBar />
      <PropertyBar />
      <div className="flex min-h-0 flex-1">
        <div className="flex w-[6px] shrink-0 flex-col">
          <span className="mt-1 h-6 w-[3px] shrink-0 border border-l-0 border-[#888]" />
          <div className="-mt-[37px] flex flex-col">
            {toolGaps.map((h, i) => (
              <span key={i} className={`flex shrink-0 items-end ${h}`}><span className="h-1 w-[2px] bg-black" /></span>
            ))}
          </div>
        </div>
        <div className="flex min-w-0 flex-1 flex-col border-l border-[#d0d0d0]">
          <PluginBar />
          <div className="flex min-h-0 flex-1">
            <Workspace />
            <ObjectManager />
            <div className="flex w-[3px] shrink-0 flex-col gap-px bg-[#e6e6e6] pt-5">
              {dockTabs.map((c, i) => (<span key={i} className={`shrink-0 ${c}`} />))}
            </div>
          </div>
        </div>
      </div>
      <svg viewBox="0 0 12 19" className="pointer-events-none absolute top-[37px] left-[110px] h-[19px] w-3" fill="#fff" stroke="#000" aria-hidden="true"><path d="M.5.800v15l3.500-3.300 2.300 5.500 2.300-1L6.300 11.500h5z" /></svg>
    </div>
  );
}
